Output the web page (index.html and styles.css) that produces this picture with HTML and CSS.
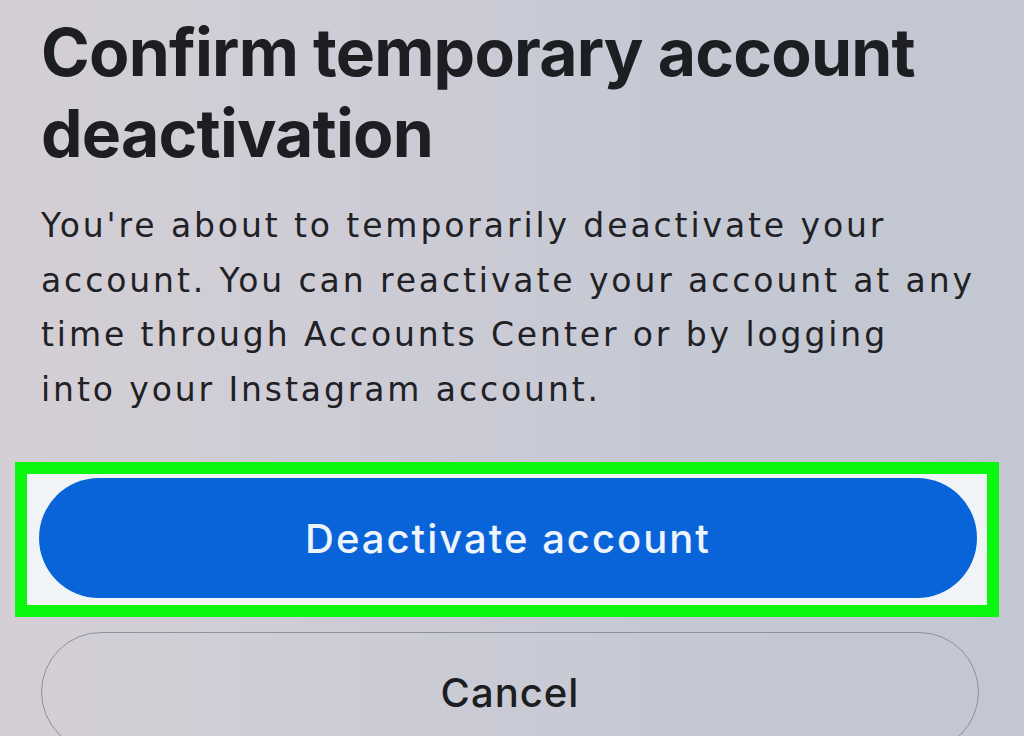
FILE: index.html
```html
<!DOCTYPE html>
<html lang="en">
<head>
    <meta charset="UTF-8">
    <title>Confirm temporary account deactivation</title>
    <link rel="stylesheet" href="styles.css">
</head>
<body>
    <div class="screen">
        <h1 class="title">Confirm temporary account deactivation</h1>

        <p class="info">You're about to temporarily deactivate your<br>
            account. You can reactivate your account at any<br>
            time through Accounts Center or by logging<br>
            into your Instagram account.</p>

        <div class="highlight">
            <button class="btn btn-primary">Deactivate account</button>
        </div>

        <button class="btn btn-cancel">Cancel</button>
    </div>
</body>
</html>
```

FILE: styles.css
```css
body {
    margin: 0;
    height: 736px;
    overflow: hidden;
    background: linear-gradient(90deg, #d4cfd5 0%, #cdccd6 35%, #c4c8d3 70%, #c2c7d2 100%);
    font-family: Inter, "Liberation Sans", sans-serif;
    color: #1c1e21;
}

.screen {
    display: flex;
    flex-direction: column;
    padding: 0 0 0 41px;
}

.title {
    margin: 12px 0 0;
    font-size: 66px;
    line-height: 81px;
    font-weight: 700;
    letter-spacing: -0.8px;
}

.info {
    margin: 25px 0 0;
    font-family: "DejaVu Sans", Inter, sans-serif;
    font-size: 33px;
    line-height: 54.5px;
    font-weight: 400;
    letter-spacing: 2.9px;
    white-space: nowrap;
    color: #1f2125;
}

.highlight {
    margin: 45px 0 0 -26px;
    width: 984px;
    border: 12px solid #0bf70f;
    background: #f1f4f6;
    padding: 4px 10px 7px 12px;
    box-sizing: border-box;
}

.btn {
    display: block;
    width: 938px;
    height: 120px;
    border-radius: 60px;
    font-family: inherit;
    font-size: 40px;
    font-weight: 500;
}

.btn-primary {
    border: none;
    background: #0a64d9;
    color: #eef4fc;
    letter-spacing: 2px;
}

.btn-cancel {
    margin-top: 15px;
    border: 1.5px solid #8d919a;
    background: transparent;
    color: #1c1e21;
    letter-spacing: 1px;
}
```
